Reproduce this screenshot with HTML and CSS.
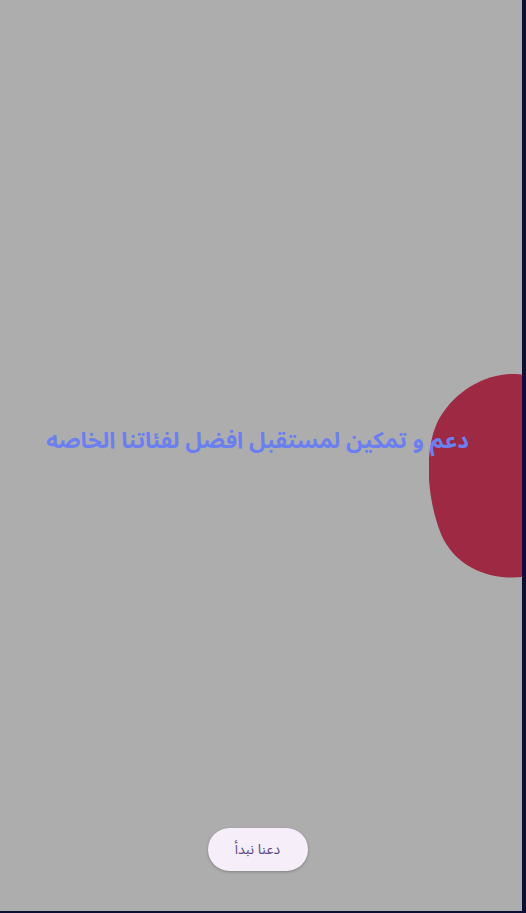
FILE: index.html
```html
<!DOCTYPE html>
<html lang="ar" dir="rtl">
<head>
<meta charset="utf-8">
<link rel="stylesheet" href="styles.css">
</head>
<body>
<div class="screen">
  <svg class="blob" width="100" height="206" viewBox="0 0 100 206" aria-hidden="true">
    <path d="M100 2 C70 -6 30 10 10 45 C-6 75 -2 125 12 160 C28 198 70 208 100 202 Z" fill="#9e2943"/>
  </svg>
  <main class="content">
    <h1 class="title">دعم و تمكين لمستقبل افضل لفئاتنا الخاصه</h1>
  </main>
  <footer class="footer">
    <button class="start">دعنا نبدأ</button>
  </footer>
</div>
</body>
</html>
```
FILE: styles.css
```css
* { box-sizing: border-box; }
html, body {
  margin: 0;
  padding: 0;
  height: 100%;
  background: #0c0f33;
}
body {
  padding: 0 4px 2px 0;
}
.screen {
  position: relative;
  height: 911px;
  width: 522px;
  background: #adadad;
  overflow: hidden;
  display: flex;
  flex-direction: column;
  font-family: "Noto Sans Arabic", "DejaVu Sans", sans-serif;
}
.blob {
  position: absolute;
  left: 429px;
  top: 374px;
  filter: blur(0.6px);
}
.content {
  position: relative;
  flex: 1;
  display: flex;
  align-items: center;
  justify-content: center;
  padding: 54px 7px 0 0;
}
.title {
  margin: 0;
  color: #6b80ee;
  font-size: 22.5px;
  font-weight: bold;
  text-align: center;
}
.footer {
  display: flex;
  justify-content: center;
  padding: 0 7px 40px 0;
}
.start {
  width: 100px;
  height: 43px;
  border: none;
  border-radius: 22px;
  background: #f6eef9;
  color: #5c4a86;
  font-family: "Noto Sans Arabic", "DejaVu Sans", sans-serif;
  font-size: 14px;
  box-shadow: 0 1px 3px rgba(0,0,0,0.25);
}
```
